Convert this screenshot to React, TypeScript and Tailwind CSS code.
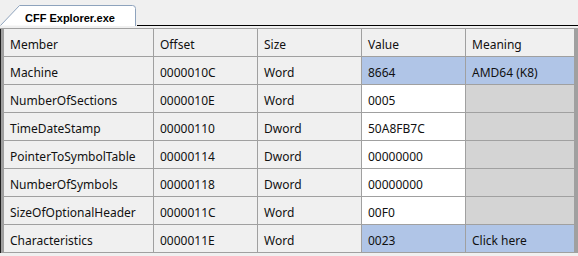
import { FC } from 'react';

type Row = {
  member: string;
  offset: string;
  size: string;
  value: string;
  meaning?: string;
  selected?: boolean;
};

const rows: Row[] = [
  { member: 'Machine', offset: '0000010C', size: 'Word', value: '8664', meaning: 'AMD64 (K8)', selected: true },
  { member: 'NumberOfSections', offset: '0000010E', size: 'Word', value: '0005' },
  { member: 'TimeDateStamp', offset: '00000110', size: 'Dword', value: '50A8FB7C' },
  { member: 'PointerToSymbolTable', offset: '00000114', size: 'Dword', value: '00000000' },
  { member: 'NumberOfSymbols', offset: '00000118', size: 'Dword', value: '00000000' },
  { member: 'SizeOfOptionalHeader', offset: '0000011C', size: 'Word', value: '00F0' },
  { member: 'Characteristics', offset: '0000011E', size: 'Word', value: '0023', meaning: 'Click here', selected: true },
];

const cell = 'h-[28px] flex items-center pl-[6px] pt-[4px] border-r border-b border-[#a0a0a0] whitespace-nowrap overflow-hidden';

const App: FC = () => {
  return (
    <div className="w-[578px] h-[256px] bg-[#f0f0f0] overflow-hidden text-[12px] text-[#111] font-['Noto_Sans',sans-serif]">
      {/* tab strip */}
      <div className="h-[26px] flex items-end">
        <div className="relative w-[137px] h-[21px] shrink-0">
          <svg className="absolute inset-0" width="137" height="21" viewBox="0 0 137 21">
            <path d="M0.5 20.5 L19.5 0.5 L132.5 0.5 Q135.5 0.5 135.5 3.5 L135.5 21" fill="#ffffff" stroke="#8ea3bd" strokeWidth="1" />
          </svg>
          <span className="absolute left-[25px] top-[5px] text-[11px] font-bold text-black font-['Liberation_Sans',Arial,sans-serif]">
            CFF Explorer.exe
          </span>
        </div>
        <div className="flex-1 h-[1px] bg-black"></div>
      </div>
      <div className="h-[2px] bg-[#f0f0f0]"></div>

      {/* table frame */}
      <div className="flex border-t border-[#a0a0a0]">
        <div className="w-[1px] bg-[#202020]"></div>
        <div className="w-[3px] bg-[#a0a0a0]"></div>
        <div className="grid grid-cols-[150px_104px_104px_104px_109px]">
          {['Member', 'Offset', 'Size', 'Value', 'Meaning'].map((h) => (
            <div key={h} className={`${cell} bg-[#f0f0f0]`}>{h}</div>
          ))}
          {rows.map((r) => (
            <div key={r.member} className="contents">
              <div className={`${cell} bg-[#f0f0f0]`}>{r.member}</div>
              <div className={`${cell} bg-[#f0f0f0]`}>{r.offset}</div>
              <div className={`${cell} bg-[#f0f0f0]`}>{r.size}</div>
              <div className={`${cell} ${r.selected ? 'bg-[#b0c5e7]' : 'bg-white'}`}>{r.value}</div>
              <div className={`${cell} ${r.selected ? 'bg-[#b0c5e7]' : 'bg-[#d4d4d4]'}`}>{r.meaning ?? ''}</div>
            </div>
          ))}
        </div>
        <div className="flex-1 bg-[#a0a0a0]"></div>
      </div>
    </div>
  );
};

export default App;
